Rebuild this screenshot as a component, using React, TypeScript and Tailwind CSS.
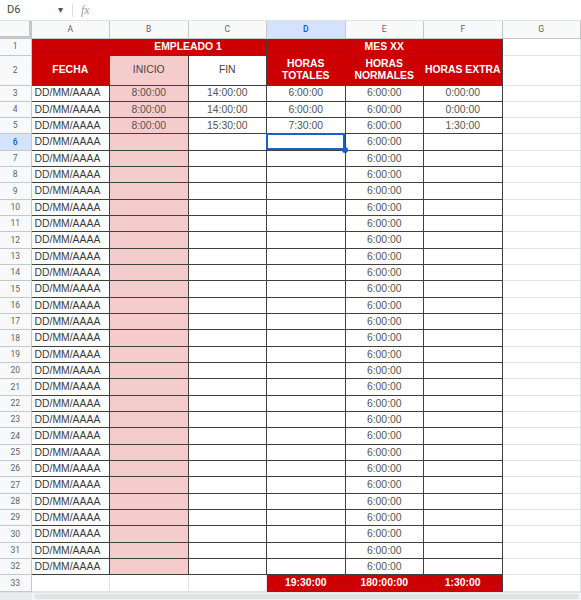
import React from "react";

// Spreadsheet: hours sheet for one employee (Google Sheets look, zoomed out)

const COLS = ["A", "B", "C", "D", "E", "F", "G"];

const RED = "bg-[#cc0000] text-white font-bold";
const DARK = "border-r border-b border-[#404040]";
const LIGHT = "border-r border-b border-[#e2e3e3]";
const CENTER = "flex items-center justify-center";

const rowsData = Array.from({ length: 30 }, (_, i) => {
  const r = i + 3;
  return {
    r,
    inicio: r <= 5 ? "8:00:00" : "",
    fin: r === 3 || r === 4 ? "14:00:00" : r === 5 ? "15:30:00" : "",
    totales: r === 3 || r === 4 ? "6:00:00" : r === 5 ? "7:30:00" : "",
    normales: "6:00:00",
    extra: r === 3 || r === 4 ? "0:00:00" : r === 5 ? "1:30:00" : "",
  };
});

function RowHead({ n, active }: { n: number; active?: boolean }) {
  return (
    <div
      className={`${CENTER} border-r border-b border-[#c7c7c7] text-[8.5px] font-['Roboto',sans-serif] ${
        active ? "bg-[#d3e3fd] text-[#0b57d0] font-medium" : "bg-[#f8f9fa] text-[#5f6368]"
      }`}
    >
      {n}
    </div>
  );
}

export default function App() {
  return (
    <div className="w-[581px] h-[600px] overflow-hidden bg-white font-['Liberation_Sans',Arial,sans-serif]">
      {/* formula bar */}
      <div className="h-[21px] flex items-center border-b border-[#e1e3e1] bg-white">
        <span className="w-[58px] pl-[7px] text-[11px] text-[#444] font-['Roboto',sans-serif]">D6</span>
        <span className="text-[10px] text-[#555] leading-none">▾</span>
        <span className="ml-[9px] w-px h-[13px] bg-[#dadce0]" />
        <span className="ml-[8px] text-[12px] italic text-[#9aa0a6] font-['Liberation_Serif',serif]">fx</span>
      </div>

      <div className="grid grid-cols-[31.5px_repeat(7,78.5px)] grid-rows-[18px_16.5px_30px_repeat(31,16.33px)] text-[10.4px]">
        {/* column headers */}
        <div className="bg-[#f8f9fa] border-r-[3px] border-b-[3px] border-[#c4c7c5]" />
        {COLS.map((c) => (
          <div
            key={c}
            className={`${CENTER} border-r border-b border-[#c7c7c7] text-[8.5px] font-['Roboto',sans-serif] ${
              c === "D" ? "bg-[#d3e3fd] text-[#0b57d0] font-medium" : "bg-[#f8f9fa] text-[#5f6368]"
            }`}
          >
            {c}
          </div>
        ))}

        {/* row 1 */}
        <RowHead n={1} />
        <div className={`${RED} ${DARK}`} />
        <div className={`${RED} ${DARK} ${CENTER} col-span-2`}>EMPLEADO 1</div>
        <div className={`${RED} ${DARK} ${CENTER} col-span-3`}>MES XX</div>
        <div className={LIGHT} />

        {/* row 2 */}
        <RowHead n={2} />
        <div className={`${RED} ${DARK} ${CENTER}`}>FECHA</div>
        <div className={`${DARK} ${CENTER} bg-[#f4cccc] text-[#444]`}>INICIO</div>
        <div className={`${DARK} ${CENTER} text-[#444]`}>FIN</div>
        <div className={`${RED} ${DARK} ${CENTER} text-center leading-[12px]`}>
          HORAS
          <br />
          TOTALES
        </div>
        <div className={`${RED} ${DARK} ${CENTER} text-center leading-[12px]`}>
          HORAS
          <br />
          NORMALES
        </div>
        <div className={`${RED} ${DARK} ${CENTER} whitespace-nowrap`}>HORAS EXTRA</div>
        <div className={LIGHT} />

        {/* data rows */}
        {rowsData.map((row) => (
          <React.Fragment key={row.r}>
            <RowHead n={row.r} active={row.r === 6} />
            <div className={`${DARK} flex items-center pl-[3px] text-[#3a3a3a]`}>DD/MM/AAAA</div>
            <div className={`${DARK} ${CENTER} bg-[#f4cccc] text-[#555]`}>{row.inicio}</div>
            <div className={`${DARK} ${CENTER} text-[#555]`}>{row.fin}</div>
            <div className={`${DARK} ${CENTER} text-[#555] relative`}>
              {row.totales}
              {row.r === 6 && (
                <>
                  <div className="absolute -left-px -top-px right-0 bottom-0 border-2 border-[#1a5fd0]" />
                  <div className="absolute -right-[3px] -bottom-[3px] w-[6px] h-[6px] rounded-full bg-[#1a5fd0]" />
                </>
              )}
            </div>
            <div className={`${DARK} ${CENTER} text-[#555]`}>{row.normales}</div>
            <div className={`${DARK} ${CENTER} text-[#555]`}>{row.extra}</div>
            <div className={LIGHT} />
          </React.Fragment>
        ))}

        {/* row 33 totals */}
        <RowHead n={33} />
        <div className={LIGHT} />
        <div className={LIGHT} />
        <div className={LIGHT} />
        <div className={`${RED} ${DARK} ${CENTER}`}>19:30:00</div>
        <div className={`${RED} ${DARK} ${CENTER}`}>180:00:00</div>
        <div className={`${RED} ${DARK} ${CENTER}`}>1:30:00</div>
        <div className={LIGHT} />
      </div>

      {/* horizontal scrollbar */}
      <div className="h-[9px] flex border-t border-[#e1e3e1] bg-[#f1f3f4]">
        <div className="w-[32px] bg-[#e8eaed]" />
        <div className="flex-1 flex items-center px-[2px]">
          <div className="w-full h-[5px] rounded-full bg-[#e3e3e3]" />
        </div>
      </div>
    </div>
  );
}
